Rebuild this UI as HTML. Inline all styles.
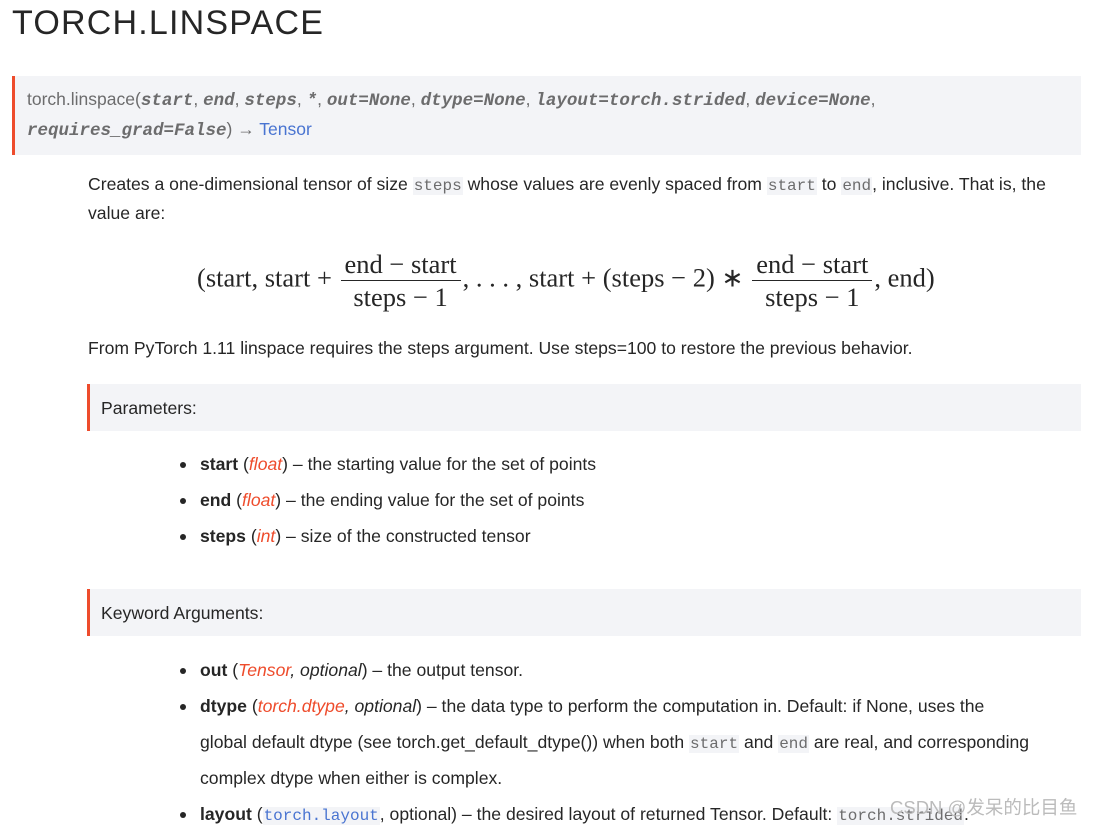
<!DOCTYPE html>
<html><head><meta charset="utf-8"><style>
body{margin:0;width:1105px;height:823px;overflow:hidden;background:#fff;font-family:"Liberation Sans",sans-serif;color:#262626;position:relative}
.a{position:absolute;white-space:nowrap}
h1{position:absolute;left:12px;top:4px;margin:0;font-weight:300;font-size:34px;letter-spacing:1.2px;color:#262626}
.sig{position:absolute;left:12px;top:76px;width:1066px;height:79px;background:#f3f4f7;border-left:3px solid #ee4c2c}
.sig .a{font-size:17.5px;color:#6c6c6d;left:12px}
.sig i{font-family:"Liberation Mono",monospace;font-weight:bold;font-size:17.5px}
.blue{color:#4974d1}
.t{font-size:17.6px;left:88px}
code{font-family:"Liberation Mono",monospace;background:#f3f4f7;color:#6c6c6d;font-size:16px;padding:0 1px}
.box{position:absolute;left:87px;width:991px;height:47px;background:#f3f4f7;border-left:3px solid #ee4c2c}
.box span{position:absolute;left:11px;top:14px;font-size:17.6px}
.li{font-size:17.6px;left:200px}
.li:before{content:"";position:absolute;left:-20px;top:8px;width:6px;height:6px;border-radius:50%;background:#262626}
.red{color:#ee4c2c;font-style:italic}
.m{font-family:"Liberation Serif",serif;font-size:26.5px}
.fr{display:inline-block;vertical-align:middle;text-align:center;margin:0 2px}
.fr div{padding:0 4px;line-height:32px}
.fr .n{border-bottom:1.3px solid #262626;padding-bottom:0}
</style></head><body>
<h1>TORCH.LINSPACE</h1>
<div class="sig">
<div class="a" style="top:13px">torch.linspace(<i>start</i>, <i>end</i>, <i>steps</i>, <i>*</i>, <i>out=None</i>, <i>dtype=None</i>, <i>layout=torch.strided</i>, <i>device=None</i>,</div>
<div class="a" style="top:43px"><i>requires_grad=False</i>) → <span class="blue">Tensor</span></div>
</div>
<div class="a t" style="top:174px">Creates a one-dimensional tensor of size <code>steps</code> whose values are evenly spaced from <code>start</code> to <code>end</code>, inclusive. That is, the</div>
<div class="a t" style="top:203px">value are:</div>
<div class="a m" style="left:197px;top:248px">(start, start + <span class="fr"><div class="n">end − start</div><div>steps − 1</div></span>, . . . , start + (steps − 2) ∗ <span class="fr"><div class="n">end − start</div><div>steps − 1</div></span>, end)</div>
<div class="a t" style="top:338px">From PyTorch 1.11 linspace requires the steps argument. Use steps=100 to restore the previous behavior.</div>
<div class="box" style="top:384px"><span>Parameters:</span></div>
<div class="a li" style="top:454px"><b>start</b> (<span class="red">float</span>) – the starting value for the set of points</div>
<div class="a li" style="top:490px"><b>end</b> (<span class="red">float</span>) – the ending value for the set of points</div>
<div class="a li" style="top:526px"><b>steps</b> (<span class="red">int</span>) – size of the constructed tensor</div>
<div class="box" style="top:589px"><span>Keyword Arguments:</span></div>
<div class="a li" style="top:660px"><b>out</b> (<span class="red">Tensor</span><i>, optional</i>) – the output tensor.</div>
<div class="a li" style="top:696px"><b>dtype</b> (<span class="red">torch.dtype</span><i>, optional</i>) – the data type to perform the computation in. Default: if None, uses the</div>
<div class="a t" style="left:200px;top:732px">global default dtype (see torch.get_default_dtype()) when both <code>start</code> and <code>end</code> are real, and corresponding</div>
<div class="a t" style="left:200px;top:768px">complex dtype when either is complex.</div>
<div class="a li" style="top:804px"><b>layout</b> (<code style="color:#4974d1">torch.layout</code>, optional) – the desired layout of returned Tensor. Default: <code>torch.strided</code>.</div>
<div class="a" style="left:890px;top:794px;font-size:18.5px;color:#bbb;font-family:'Liberation Sans','Noto Sans CJK SC',sans-serif">CSDN @发呆的比目鱼</div>
</body></html>
